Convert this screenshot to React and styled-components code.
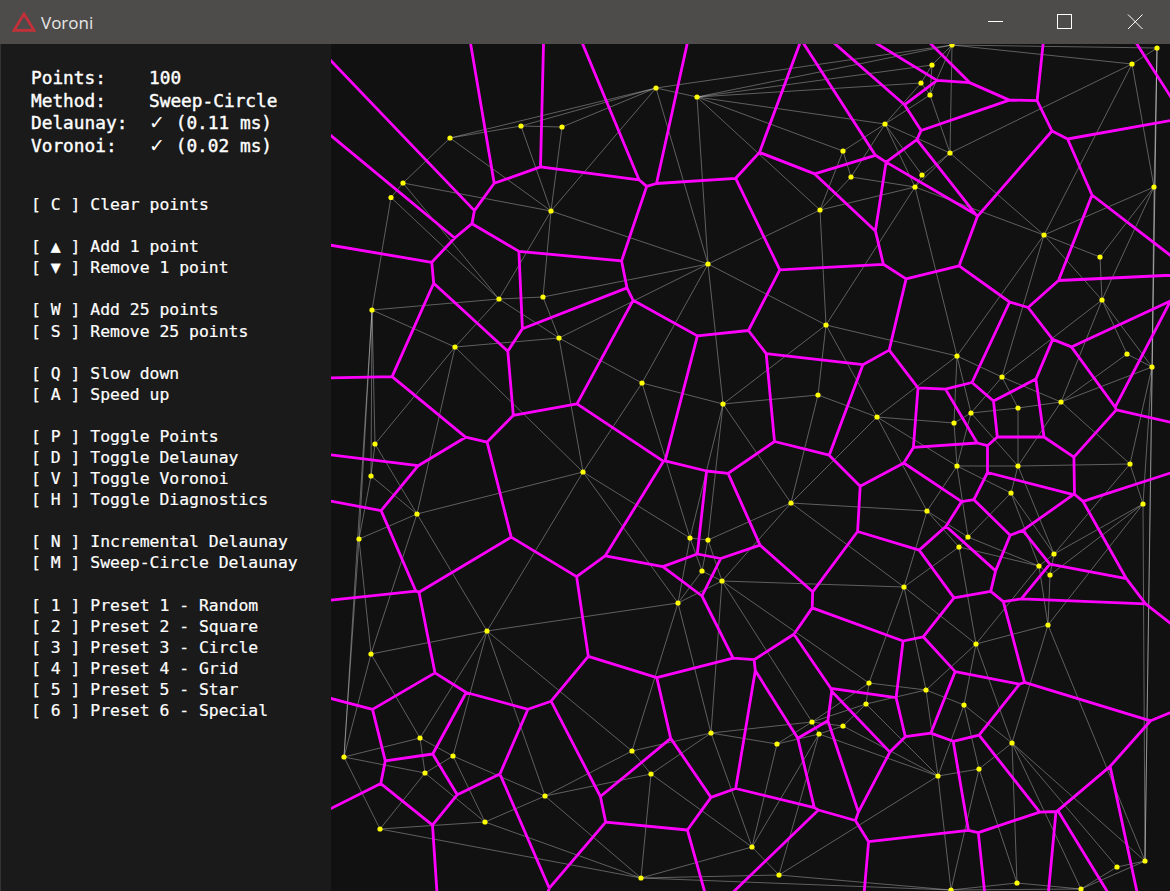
import React, { useMemo } from "react";
import styled, { createGlobalStyle } from "styled-components";

const GlobalStyle = createGlobalStyle`
  html, body {
    margin: 0;
    padding: 0;
    background: #111111;
  }
`;

const Window = styled.div`
  width: 1170px;
  height: 891px;
  display: flex;
  flex-direction: column;
  overflow: hidden;
`;

const TitleBar = styled.div`
  height: 44px;
  flex: none;
  display: flex;
  align-items: center;
  background: #4d4c4a;
  color: #e8e8e8;
`;

const AppIcon = styled.svg`
  width: 24px;
  height: 20px;
  margin: 0 5px 0 12px;
`;

const AppName = styled.div`
  flex: 1;
  font: 400 17px "Open Sans", "Noto Sans", sans-serif;
`;

const WinButton = styled.div`
  width: 70px;
  height: 44px;
  display: flex;
  align-items: center;
  justify-content: center;
`;

const Body = styled.div`
  flex: 1;
  display: flex;
  min-height: 0;
`;

const Sidebar = styled.div`
  width: 331px;
  flex: none;
  box-sizing: border-box;
  padding: 22.5px 0 0 30px;
  border-left: 1px solid #333333;
  background: #1a1a1a;
  color: #ffffff;
  font: 400 16.42px "DejaVu Sans Mono", "Liberation Mono", monospace;
  -webkit-text-stroke: 0.2px #ffffff;
`;

const Stats = styled.div`
  display: grid;
  grid-template-columns: 118px auto;
  grid-auto-rows: 22.6px;
  align-items: center;
  margin-bottom: 37.2px;
  font-size: 17.8px;
  -webkit-text-stroke: 0.4px #ffffff;
`;

const Check = styled.span`
  display: inline-block;
  width: 16px;
  font-family: "DejaVu Sans", sans-serif;
  font-size: 19px;
  line-height: 1;
  -webkit-text-stroke: 0;
`;

const HelpGroup = styled.div`
  margin-bottom: 21.08px;
`;

const HelpRow = styled.div`
  height: 21.08px;
  line-height: 21.08px;
  white-space: pre;
`;

const Canvas = styled.div`
  flex: 1;
  background: #111111;
`;

const Plot = styled.svg`
  display: block;
  width: 839px;
  height: 847px;
`;

const stats = [
  ["Points:", "100"],
  ["Method:", "Sweep-Circle"],
  ["Delaunay:", " (0.11 ms)", true],
  ["Voronoi:", " (0.02 ms)", true],
];

const help = [
  [["C", "Clear points"]],
  [["▲", "Add 1 point"], ["▼", "Remove 1 point"]],
  [["W", "Add 25 points"], ["S", "Remove 25 points"]],
  [["Q", "Slow down"], ["A", "Speed up"]],
  [["P", "Toggle Points"], ["D", "Toggle Delaunay"], ["V", "Toggle Voronoi"], ["H", "Toggle Diagnostics"]],
  [["N", "Incremental Delaunay"], ["M", "Sweep-Circle Delaunay"]],
  [
    ["1", "Preset 1 - Random"],
    ["2", "Preset 2 - Square"],
    ["3", "Preset 3 - Circle"],
    ["4", "Preset 4 - Grid"],
    ["5", "Preset 5 - Star"],
    ["6", "Preset 6 - Special"],
  ],
];

const points = [
  [656, 88], [697, 97], [521, 126], [562, 127], [450, 138], [403, 183], [391, 197.5], [551, 211],
  [708, 264], [499, 299], [543, 297], [372, 310], [952, 45], [1157, 48], [1132, 64], [932, 65],
  [921, 83], [930, 95], [885, 124], [843, 151], [950, 153], [851, 177], [922, 175], [915, 187],
  [820, 210], [1044, 235], [1154, 187], [1100, 257], [1102, 300], [826, 325], [455, 347], [559, 338],
  [642, 383], [723, 404], [375, 444], [371, 476], [417, 514], [583, 472], [359, 539], [690, 538],
  [708, 540], [702, 571], [722, 581], [678, 603], [957, 356], [1002, 377], [1127, 354], [1152, 367],
  [1061, 402], [1018, 408], [971, 413], [954, 423], [818, 395], [877, 417], [957, 466], [1018, 466],
  [1130, 464], [1011, 493], [1143, 504], [791, 503], [927, 511], [968, 537], [959, 547], [1054, 554],
  [1039, 566], [1050, 575], [904, 587], [487, 631], [371, 654], [420, 738], [453, 756], [344, 757],
  [425, 773], [632, 751], [711, 733], [651, 774], [545, 796], [485, 822], [380, 829], [641, 878],
  [1048, 625], [976, 644], [869, 683], [926, 690], [866, 704], [964, 705], [812, 722], [843, 726],
  [819, 734], [777, 744], [1012, 743], [979, 769], [938, 776], [1117, 867], [1145, 861], [1017, 883],
  [1081, 889], [951, 890], [752, 847], [779, 875],
];

function circumcircle(pts, a, b, c) {
  const [ax, ay] = pts[a];
  const [bx, by] = pts[b];
  const [cx, cy] = pts[c];
  const d = 2 * (ax * (by - cy) + bx * (cy - ay) + cx * (ay - by));
  const a2 = ax * ax + ay * ay;
  const b2 = bx * bx + by * by;
  const c2 = cx * cx + cy * cy;
  const x = (a2 * (by - cy) + b2 * (cy - ay) + c2 * (ay - by)) / d;
  const y = (a2 * (cx - bx) + b2 * (ax - cx) + c2 * (bx - ax)) / d;
  return { a, b, c, x, y, r2: (ax - x) ** 2 + (ay - y) ** 2 };
}

// Bowyer-Watson, then the dual edges of the triangles that are left
function buildDiagram(input) {
  const n = input.length;
  const far = 3e7;
  const pts = [...input, [-far, -far], [far, -far], [0, far]];
  let tris = [circumcircle(pts, n, n + 1, n + 2)];

  for (let i = 0; i < n; i++) {
    const [px, py] = pts[i];
    const bad = [];
    const keep = [];
    for (const t of tris) {
      if ((px - t.x) ** 2 + (py - t.y) ** 2 < t.r2) bad.push(t);
      else keep.push(t);
    }
    const count = new Map();
    for (const t of bad) {
      for (const [u, v] of [[t.a, t.b], [t.b, t.c], [t.c, t.a]]) {
        const key = u < v ? `${u}_${v}` : `${v}_${u}`;
        count.set(key, (count.get(key) || 0) + 1);
      }
    }
    for (const [key, c] of count) {
      if (c === 1) {
        const [u, v] = key.split("_").map(Number);
        keep.push(circumcircle(pts, u, v, i));
      }
    }
    tris = keep;
  }

  tris = tris.filter((t) => t.a < n && t.b < n && t.c < n);

  const edges = new Map();
  tris.forEach((t) => {
    for (const [u, v, w] of [[t.a, t.b, t.c], [t.b, t.c, t.a], [t.c, t.a, t.b]]) {
      const key = u < v ? `${u}_${v}` : `${v}_${u}`;
      if (!edges.has(key)) edges.set(key, { u, v, w, owners: [] });
      edges.get(key).owners.push(t);
    }
  });

  const delaunay = [];
  const voronoi = [];
  for (const { u, v, w, owners } of edges.values()) {
    delaunay.push([pts[u], pts[v]]);
    if (owners.length === 2) {
      voronoi.push([[owners[0].x, owners[0].y], [owners[1].x, owners[1].y]]);
    } else {
      // hull edge: ray going away from the third corner
      let dx = pts[v][1] - pts[u][1];
      let dy = pts[u][0] - pts[v][0];
      const side = dx * (pts[w][0] - pts[u][0]) + dy * (pts[w][1] - pts[u][1]);
      if (side > 0) {
        dx = -dx;
        dy = -dy;
      }
      const len = Math.hypot(dx, dy);
      const c = owners[0];
      voronoi.push([[c.x, c.y], [c.x + (dx / len) * 3000, c.y + (dy / len) * 3000]]);
    }
  }
  return { delaunay, voronoi };
}

function toPath(segments) {
  return segments
    .map(([p, q]) => `M${p[0].toFixed(1)} ${p[1].toFixed(1)}L${q[0].toFixed(1)} ${q[1].toFixed(1)}`)
    .join("");
}

export default function App() {
  const { delaunay, voronoi } = useMemo(() => buildDiagram(points), []);

  return (
    <>
      <GlobalStyle />
      <Window>
        <TitleBar>
          <AppIcon viewBox="0 0 24 20">
            <path d="M12 2 L22 18.3 H2 Z" fill="none" stroke="#c4303a" strokeWidth="2.7" />
          </AppIcon>
          <AppName>Voroni</AppName>
          <WinButton>
            <svg width="16" height="2" viewBox="0 0 16 2">
              <path d="M1 0.5H16" stroke="#ffffff" strokeWidth="1" />
            </svg>
          </WinButton>
          <WinButton>
            <svg width="16" height="16" viewBox="0 0 16 16">
              <rect x="0.5" y="0.5" width="14" height="14" fill="none" stroke="#ffffff" strokeWidth="1" />
            </svg>
          </WinButton>
          <WinButton>
            <svg width="16" height="16" viewBox="0 0 16 16">
              <path d="M1 0.5L15.5 15M15.5 0.5L1 15" stroke="#ffffff" strokeWidth="1" />
            </svg>
          </WinButton>
        </TitleBar>
        <Body>
          <Sidebar>
            <Stats>
              {stats.map(([label, value, ok]) => (
                <React.Fragment key={label}>
                  <div>{label}</div>
                  <div>
                    {ok && <Check>✓</Check>}
                    {value}
                  </div>
                </React.Fragment>
              ))}
            </Stats>
            {help.map((group) => (
              <HelpGroup key={group[0][0]}>
                {group.map(([key, label]) => (
                  <HelpRow key={key}>{`[ ${key} ] ${label}`}</HelpRow>
                ))}
              </HelpGroup>
            ))}
          </Sidebar>
          <Canvas>
            <Plot viewBox="331 44 839 847">
              {delaunay.map(([p, q]) => (
                <line
                  key={`${p[0]}_${p[1]}_${q[0]}_${q[1]}`}
                  x1={p[0]}
                  y1={p[1]}
                  x2={q[0]}
                  y2={q[1]}
                  stroke="#ffffff"
                  strokeOpacity="0.33"
                  strokeWidth="1"
                />
              ))}
              <path d={toPath(voronoi)} stroke="#ff00ff" strokeWidth="2.8" fill="none" />
              {points.map(([x, y]) => (
                <circle key={`${x}_${y}`} cx={x} cy={y} r="2.6" fill="#ffff00" />
              ))}
            </Plot>
          </Canvas>
        </Body>
      </Window>
    </>
  );
}
